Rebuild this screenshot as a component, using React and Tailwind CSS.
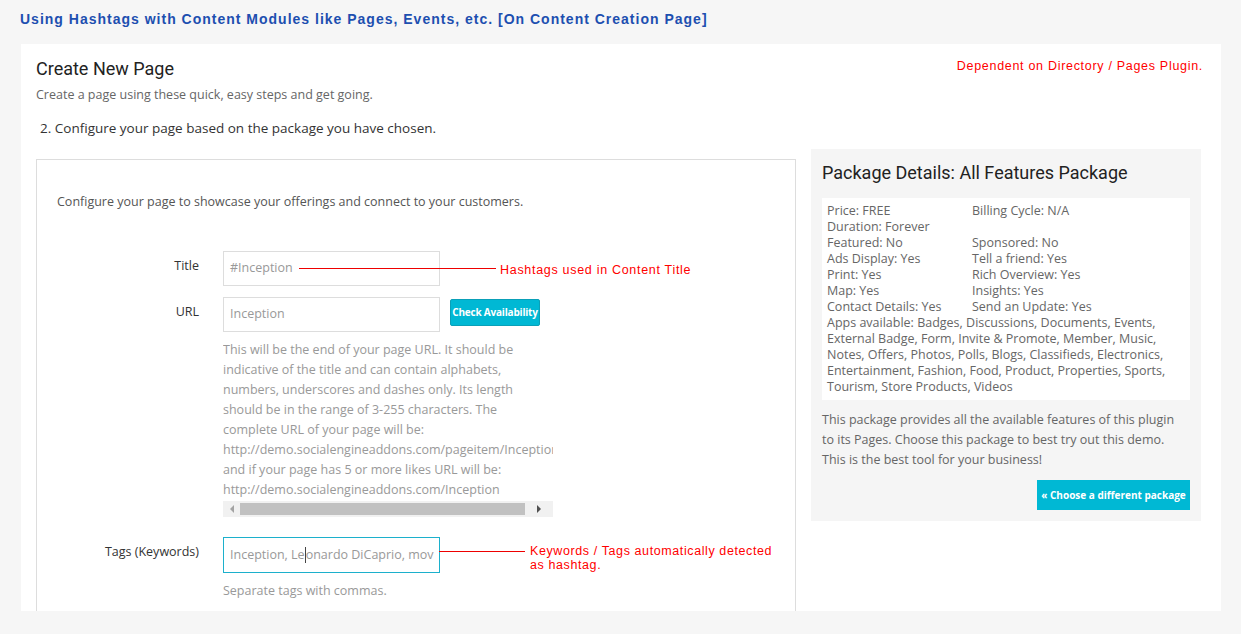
import React from "react";

const body = { fontFamily: '"Open Sans", "Noto Sans", sans-serif' };
const rob = { fontFamily: 'Roboto, "Noto Sans", sans-serif' };
const ari = { fontFamily: '"Liberation Sans", Arial, sans-serif' };

const descLines = [
  "This will be the end of your page URL. It should be",
  "indicative of the title and can contain alphabets,",
  "numbers, underscores and dashes only. Its length",
  "should be in the range of 3-255 characters. The",
  "complete URL of your page will be:",
  "http://demo.socialengineaddons.com/pageitem/Inception",
  "and if your page has 5 or more likes URL will be:",
  "http://demo.socialengineaddons.com/Inception",
];

const pkg = [
  ["Price: FREE", "Billing Cycle: N/A"],
  ["Duration: Forever", ""],
  ["Featured: No", "Sponsored: No"],
  ["Ads Display: Yes", "Tell a friend: Yes"],
  ["Print: Yes", "Rich Overview: Yes"],
  ["Map: Yes", "Insights: Yes"],
  ["Contact Details: Yes", "Send an Update: Yes"],
];

const apps = [
  "Apps available: Badges, Discussions, Documents, Events,",
  "External Badge, Form, Invite & Promote, Member, Music,",
  "Notes, Offers, Photos, Polls, Blogs, Classifieds, Electronics,",
  "Entertainment, Fashion, Food, Product, Properties, Sports,",
  "Tourism, Store Products, Videos",
];

export default function App() {
  return (
    <div className="w-[1241px] h-[634px] bg-[#f6f6f6] overflow-hidden" style={body}>
      <div
        className="h-[44px] pl-[20px] pt-[9px] text-[14px] font-bold tracking-[1px] text-[#1d4fb0]"
        style={ari}
      >
        Using Hashtags with Content Modules like Pages, Events, etc. [On Content Creation Page]
      </div>
      <div className="ml-[21px] w-[1200px] h-[567px] bg-white overflow-hidden px-[15px] pt-[14px]">
        <div className="flex justify-between">
          <div className="text-[18px] text-[#222] leading-[22px]" style={rob}>
            Create New Page
          </div>
          <div
            className="text-[12.5px] text-[#f00] tracking-[0.7px] pr-[3px] pt-0 leading-[16px]"
            style={ari}
          >
            Dependent on Directory / Pages Plugin.
          </div>
        </div>
        <div className="text-[12.5px] text-[#666] mt-[6px] leading-[18px]">
          Create a page using these quick, easy steps and get going.
        </div>
        <div className="text-[13.5px] text-[#333] mt-[14px] ml-[4px] leading-[20px]">
          2. Configure your page based on the package you have chosen.
        </div>
        <div className="flex mt-[11px] gap-[15px] items-start">
          {/* left form */}
          <div className="w-[760px] h-[480px] mt-[10px] border border-[#ddd] shrink-0">
            <div className="text-[12.5px] text-[#555] mt-[33px] ml-[20px] leading-[18px]">
              Configure your page to showcase your offerings and connect to your customers.
            </div>
            <div className="mt-[40px] flex flex-col">
              {/* Title */}
              <div className="flex">
                <div className="w-[162px] text-right text-[12.5px] text-[#333] pt-[6px]">Title</div>
                <div className="ml-[24px] relative">
                  <div className="w-[217px] h-[35px] border border-[#ddd] flex items-center pl-[6px] text-[12.5px] text-[#999]">
                    <span>#Inception</span>
                    <span className="ml-[6px] w-[197px] h-[1px] bg-[#e00] shrink-0"></span>
                  </div>
                  <div
                    className="absolute left-[277px] top-[10px] whitespace-nowrap text-[12.5px] text-[#f00] tracking-[0.7px]"
                    style={ari}
                  >
                    Hashtags used in Content Title
                  </div>
                </div>
              </div>
              {/* URL */}
              <div className="flex mt-[11px]">
                <div className="w-[162px] text-right text-[12.5px] text-[#333] pt-[6px]">URL</div>
                <div className="ml-[24px]">
                  <div className="flex items-start">
                    <div className="w-[217px] h-[35px] border border-[#ddd] flex items-center pl-[6px] text-[12.5px] text-[#999]">
                      Inception
                    </div>
                    <div className="ml-[10px] mt-[2px] w-[90px] h-[27px] bg-[#00b8d4] border border-[#0aa0b8] rounded-[2px] flex items-center justify-center text-white text-[10px] font-bold tracking-[-0.2px]">
                      Check Availability
                    </div>
                  </div>
                  <div className="w-[330px] mt-[8px]">
                    <div className="overflow-hidden text-[12.5px] text-[#999] leading-[20px]">
                      {descLines.map((l, i) => (
                        <div key={i} className="whitespace-nowrap">{l}</div>
                      ))}
                    </div>
                    <div className="h-[16px] bg-[#f1f1f1] flex items-center mt-[1px]">
                      <div className="w-[17px] flex justify-center">
                        <div className="w-0 h-0 border-y-[4px] border-y-transparent border-r-[4px] border-r-[#a3a3a3]"></div>
                      </div>
                      <div className="w-[285px] h-[12px] bg-[#c1c1c1]"></div>
                      <div className="flex-1 flex justify-center">
                        <div className="w-0 h-0 border-y-[4px] border-y-transparent border-l-[4px] border-l-[#505050]"></div>
                      </div>
                    </div>
                  </div>
                </div>
              </div>
              {/* Tags */}
              <div className="flex mt-[20px]">
                <div className="w-[162px] text-right text-[12.5px] text-[#333] pt-[6px]">Tags (Keywords)</div>
                <div className="ml-[24px] relative">
                  <div className="w-[217px] h-[36px] border border-[#1cb0cc] flex items-center pl-[6px] text-[12.5px] text-[#999] overflow-hidden whitespace-nowrap">
                    <span>Inception, Le</span>
                    <span className="inline-block w-[1px] h-[16px] bg-[#444] shrink-0"></span>
                    <span>onardo DiCaprio, mov</span>
                  </div>
                  <div className="absolute left-[216px] top-[14px] w-[86px] h-[1px] bg-[#e00]"></div>
                  <div
                    className="absolute left-[307px] top-[7px] whitespace-nowrap text-[12.5px] text-[#f00] tracking-[0.6px] leading-[14px]"
                    style={ari}
                  >
                    Keywords / Tags automatically detected
                    <br />
                    as hashtag.
                  </div>
                  <div className="mt-[9px] text-[12.5px] text-[#999]">Separate tags with commas.</div>
                </div>
              </div>
            </div>
          </div>
          {/* right package */}
          <div className="w-[390px] h-[372px] bg-[#f5f5f5] px-[11px] shrink-0">
            <div className="text-[18px] text-[#222] pt-[12px] leading-[24px]" style={rob}>
              Package Details: All Features Package
            </div>
            <div className="bg-white mt-[13px] px-[5px] py-[5px] text-[12.5px] text-[#666] leading-[16px]">
              {pkg.map(([a, b], i) => (
                <div key={i} className="flex">
                  <div className="w-[145px]">{a}</div>
                  <div>{b}</div>
                </div>
              ))}
              {apps.map((l, i) => (
                <div key={i} className="whitespace-nowrap">{l}</div>
              ))}
            </div>
            <div className="mt-[10px] text-[12.5px] text-[#666] leading-[20px]">
              <div>This package provides all the available features of this plugin</div>
              <div>to its Pages. Choose this package to best try out this demo.</div>
              <div>This is the best tool for your business!</div>
            </div>
            <div className="flex justify-end mt-[10px]">
              <div className="w-[153px] h-[30px] bg-[#00b8d4] flex items-center justify-center text-white text-[10px] font-bold">
                « Choose a different package
              </div>
            </div>
          </div>
        </div>
      </div>
    </div>
  );
}
